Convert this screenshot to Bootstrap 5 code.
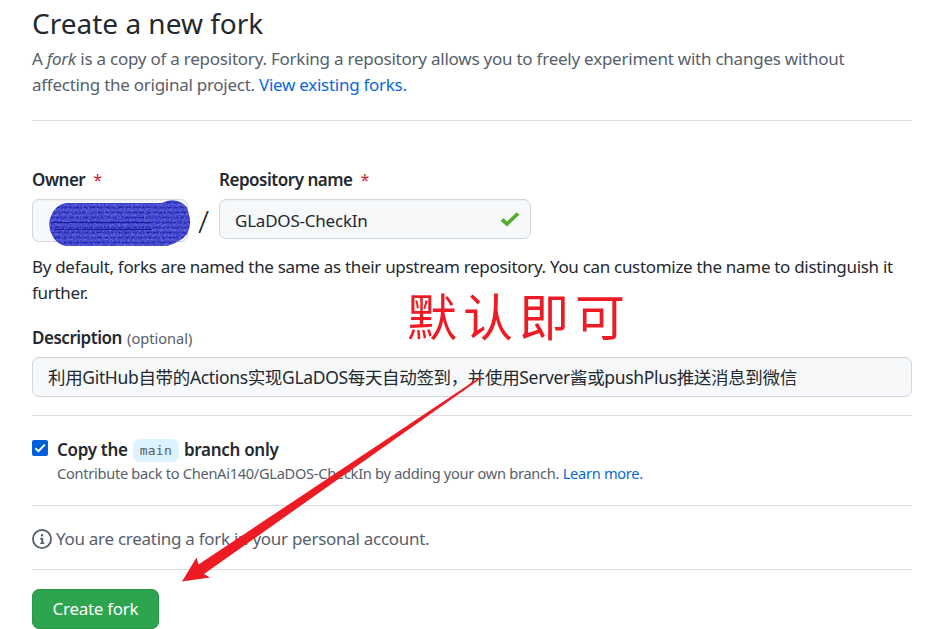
<!DOCTYPE html>
<html lang="en">
<head>
<meta charset="utf-8">
<meta name="viewport" content="width=device-width, initial-scale=1">
<title>Create a new fork</title>
<link href="https://cdn.jsdelivr.net/npm/bootstrap@5.3.0/dist/css/bootstrap.min.css" rel="stylesheet">
<style>
body{font-family:"Noto Sans","Noto Sans CJK SC",sans-serif;font-size:17px;line-height:26px;letter-spacing:-.28px;color:#24292f;overflow:hidden;height:629px}
.page{padding:4px 20px 0 32px}
.page a{color:#0969da;text-decoration:none}
.title{font-size:28px;line-height:38px;font-weight:400;letter-spacing:0}
.muted{color:#57606a}
.intro{margin-top:4px;letter-spacing:-.235px}
.intro-end{letter-spacing:-.27px}
.rule{height:1px;background:#d8dee4}
.rule-intro{margin-top:22px}
.names{margin-top:46px}
.fw-label{font-weight:600;letter-spacing:-.48px}
.req{color:#cf222e;font-weight:400;font-size:16px}
.field{border:1px solid #d0d7de;border-radius:7px;background:#f6f8fa;box-shadow:inset 0 1px 0 rgba(208,215,222,.2);padding:0 15px;height:40px;margin-top:6px}
.owner-box{width:156px;height:43px}
.repo-box{width:312px;padding-right:9px;letter-spacing:-.22px}
.repo-value{padding-top:3px}
.scribble{left:15px;top:-1px}
.slash{width:31px;font-size:32px;font-weight:300;line-height:43px}
.naming{margin-top:12px;letter-spacing:-.31px;white-space:nowrap}
.desc-label{margin-top:19px}
.desc-box{font-size:17.5px;letter-spacing:-.34px;white-space:nowrap}
.rule-desc{margin-top:18px}
.copy{margin-top:21px;gap:9px}
.check{width:16px;height:16px;flex:none;margin-top:3px}
.copy-title{font-weight:600;letter-spacing:-.3px}
.branch{font-family:"DejaVu Sans Mono",monospace;font-size:13px;font-weight:400;color:#57606a;background:#ddf4ff;border-radius:7px;line-height:24px;padding:0 7px;height:23px;letter-spacing:.25px;margin:0 5px}
.small-text{font-size:14.6px;line-height:22px}
.opt{letter-spacing:0;margin-left:1px}
.caption-row{margin-top:-1px;white-space:nowrap}
.rule-copy{margin-top:21px}
.info{margin-top:20px}
.rule-info{margin-top:17px}
.create{width:127px;height:40px;margin-top:19px;border-radius:7px;background:#2da44e;border:1px solid #2a964a;color:#fff;font-size:17px;line-height:26px;letter-spacing:-.28px}
.handnote{left:407px;top:279px;font-family:"Noto Sans CJK SC",sans-serif;font-size:50px;line-height:70px;letter-spacing:6px;color:#ed1c24;white-space:nowrap}
</style>
</head>
<body class="bg-white position-relative">
<main class="page">
  <h1 class="title m-0">Create a new fork</h1>
  <div class="muted intro">
    <div class="text-nowrap">A <em>fork</em> is a copy of a repository. Forking a repository allows you to freely experiment with changes without</div>
    <div class="intro-end">affecting the original project. <a href="#">View existing forks.</a></div>
  </div>
  <div class="rule rule-intro"></div>

  <div class="d-flex names">
    <div>
      <div class="fw-label">Owner <span class="req ms-1">*</span></div>
      <div class="field owner-box position-relative">
        <svg class="scribble position-absolute" width="144" height="49" viewBox="0 0 144 49">
          <defs>
            <pattern id="strokes" width="7" height="5" patternUnits="userSpaceOnUse">
              <rect width="7" height="5" fill="#3438c4"/>
              <path d="M0 1h7" stroke="#4a51d8"/><path d="M0 3.5h5" stroke="#1c20a6"/>
            </pattern>
            <filter id="grain"><feTurbulence type="fractalNoise" baseFrequency=".55" numOctaves="2" seed="3"/><feColorMatrix values="0 0 0 0 .4 0 0 0 0 .45 0 0 0 0 .95 2.6 0 0 0 -1.1"/><feComposite in2="SourceGraphic" operator="in"/></filter>
          </defs>
          <path d="M18 4H114Q123 -1 132 3Q140 6 141 16Q144 26 139 35Q133 43 119 47H18Q8 45 4 36Q-1 26 3 17Q7 6 18 4Z" fill="url(#strokes)"/>
          <path d="M18 4H114Q123 -1 132 3Q140 6 141 16Q144 26 139 35Q133 43 119 47H18Q8 45 4 36Q-1 26 3 17Q7 6 18 4Z" filter="url(#grain)" opacity=".45"/>
          <path d="M3 23.500H104M6 30.500H104" stroke="#141998" fill="none"/>
        </svg>
      </div>
    </div>
    <div class="slash align-self-end text-center">/</div>
    <div>
      <div class="fw-label">Repository name <span class="req ms-1">*</span></div>
      <div class="field repo-box d-flex align-items-center justify-content-between">
        <span class="repo-value">GLaDOS-CheckIn</span>
        <svg width="22" height="17" viewBox="0 0 22 17"><path d="M3 8.500L8 13L19 2.500" fill="none" stroke="#55ad30" stroke-width="3.700"/></svg>
      </div>
    </div>
  </div>

  <div class="naming">
    <div>By default, forks are named the same as their upstream repository. You can customize the name to distinguish it</div>
    <div>further.</div>
  </div>

  <div class="desc-label"><span class="fw-label">Description</span> <span class="small-text muted opt">(optional)</span></div>
  <div class="field d-flex align-items-center desc-box">利用GitHub自带的Actions实现GLaDOS每天自动签到，并使用Server酱或pushPlus推送消息到微信</div>
  <div class="rule rule-desc"></div>

  <div class="d-flex copy">
    <svg class="check" viewBox="0 0 16 16"><rect width="16" height="16" rx="2" fill="#005fdb"/><path d="M3.4 8.2L6.5 11.2L12.8 4.6" fill="none" stroke="#fff" stroke-width="2"/></svg>
    <div>
      <div class="copy-title d-flex align-items-center"><span>Copy the</span><span class="branch">main</span><span>branch only</span></div>
      <div class="small-text muted caption-row">Contribute back to ChenAi140/GLaDOS-CheckIn by adding your own branch. <a href="#">Learn more.</a></div>
    </div>
  </div>
  <div class="rule rule-copy"></div>

  <div class="d-flex align-items-center muted info">
    <svg width="20" height="20" viewBox="0 0 16 16" fill="currentColor"><path d="M8 1.5a6.5 6.5 0 1 0 0 13 6.5 6.5 0 0 0 0-13M0 8a8 8 0 1 1 16 0A8 8 0 0 1 0 8m6.5-.25A.75.75 0 0 1 7.25 7h1a.75.75 0 0 1 .75.75v2.75h.25a.75.75 0 0 1 0 1.5h-2a.75.75 0 0 1 0-1.5h.25v-2h-.25a.75.75 0 0 1-.75-.75M8 6a1 1 0 1 1 0-2 1 1 0 0 1 0 2"/></svg>
    <span class="ms-1">You are creating a fork in your personal account.</span>
  </div>
  <div class="rule rule-info"></div>
  <button class="btn create p-0" type="button">Create fork</button>
</main>

<div class="handnote position-absolute">默认即可</div>
<svg class="position-absolute top-0 start-0 pe-none" width="932" height="629" viewBox="0 0 932 629"><path d="M182 581.500L196.500 557.500L198.500 564.500L481 376.500L481.500 378L204 574L210 577.500Z" fill="#ed1c24"/></svg>
<script src="https://cdn.jsdelivr.net/npm/bootstrap@5.3.0/dist/js/bootstrap.bundle.min.js"></script>
</body>
</html>
